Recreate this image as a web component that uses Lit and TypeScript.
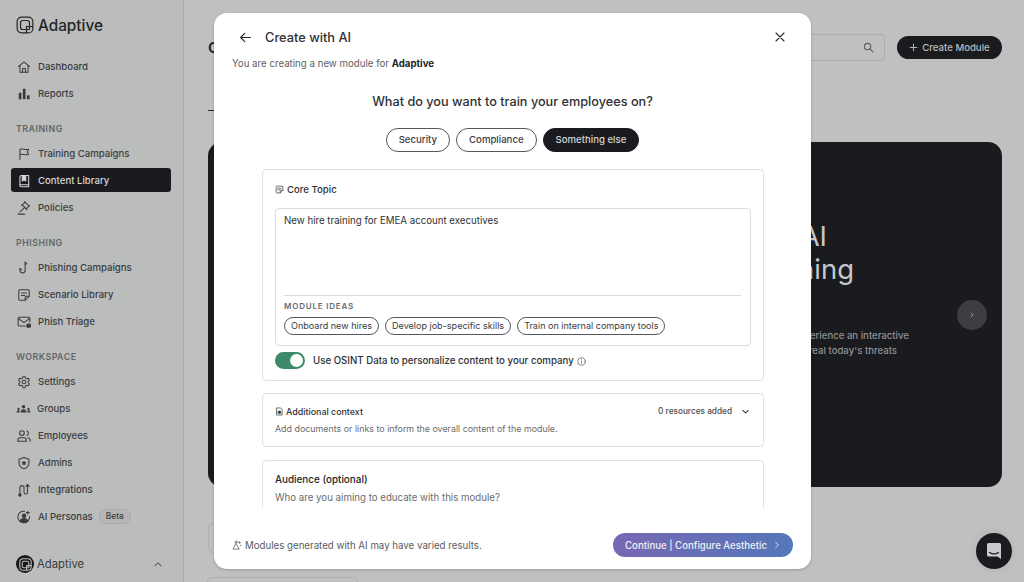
import { LitElement, html, css, svg } from "lit";
import { customElement } from "lit/decorators.js";

const icons: Record<string, any> = {
  home: svg`<path d="M2.500 11 12 3.500l9.500 7.500"/><path d="M5 9.500V21h14V9.500"/><path d="M9.500 21v-6.500h5V21"/>`,
  bars: svg`<g fill="currentColor" stroke="none"><rect x="3" y="10" width="4.600" height="11" rx="1"/><rect x="10" y="3" width="4.600" height="18" rx="1"/><rect x="17" y="14" width="4.600" height="7" rx="1"/></g>`,
  flag: svg`<path d="M5 22V4c5-1.800 9 1.800 15 0l-2.500 4.500L20 13c-6 1.800-10-1.800-15 0"/>`,
  book: svg`<path d="M5 5a2.500 2.500 0 0 1 2.500-2.500H20V22H7.500A2.500 2.500 0 0 1 5 19.500z"/><path d="M9 2.500V12l3-2 3 2V2.500" fill="currentColor"/><path d="M5 18.500h15"/>`,
  gavel: svg`<path d="m14 10.500-9 8"/><path d="m15.500 14 6-6"/><path d="m8 7.500 6-5.500"/><path d="m9 6.500 8 8.500"/><path d="m20.500 8.500-7.500-7"/><path d="M2 22.500h11"/>`,
  hook: svg`<path d="M14 6v10a4.500 4.500 0 0 1-9 0v-3.500l3 2.500"/><path d="M14 2v4"/><path d="m17 5-3-3"/>`,
  note: svg`<path d="M3 5a2 2 0 0 1 2-2h14a2 2 0 0 1 2 2v9l-7 7H5a2 2 0 0 1-2-2z"/><path d="M7.500 8.500h9M7.500 13h6"/><path d="M14 21v-5a2 2 0 0 1 2-2h5"/>`,
  mail: svg`<path d="M14 19H4a2 2 0 0 1-2-2V6a2 2 0 0 1 2-2h16a2 2 0 0 1 2 2v6"/><path d="m2.500 6 9.500 7 9.500-7"/><rect x="17" y="15.500" width="6" height="5.500" rx="1.500" fill="currentColor"/>`,
  gear: svg`<path d="M12.220 2h-.44a2 2 0 0 0-2 2v.18a2 2 0 0 1-1 1.730l-.43.25a2 2 0 0 1-2 0l-.15-.08a2 2 0 0 0-2.730.73l-.22.38a2 2 0 0 0 .73 2.730l.15.1a2 2 0 0 1 1 1.720v.51a2 2 0 0 1-1 1.740l-.15.09a2 2 0 0 0-.73 2.730l.22.38a2 2 0 0 0 2.730.73l.15-.08a2 2 0 0 1 2 0l.43.25a2 2 0 0 1 1 1.730V20a2 2 0 0 0 2 2h.44a2 2 0 0 0 2-2v-.18a2 2 0 0 1 1-1.730l.43-.25a2 2 0 0 1 2 0l.15.08a2 2 0 0 0 2.730-.73l.22-.39a2 2 0 0 0-.73-2.730l-.15-.08a2 2 0 0 1-1-1.740v-.5a2 2 0 0 1 1-1.740l.15-.09a2 2 0 0 0 .73-2.730l-.22-.38a2 2 0 0 0-2.730-.73l-.15.08a2 2 0 0 1-2 0l-.43-.25a2 2 0 0 1-1-1.730V4a2 2 0 0 0-2-2z"/><circle cx="12" cy="12" r="3"/>`,
  groups: svg`<g fill="currentColor" stroke="none"><circle cx="12" cy="8" r="3"/><path d="M7 18c0-3.500 2.200-5.500 5-5.500s5 2 5 5.500z"/><circle cx="3.500" cy="12" r="2"/><path d="M0 18c0-2.500 1.500-4 3.500-4 .8 0 1.500.3 2 .7C5 15.800 5 17 5 18z"/><circle cx="20.500" cy="12" r="2"/><path d="M24 18c0-2.500-1.500-4-3.500-4-.8 0-1.500.3-2 .7.5 1.100.5 2.300.5 3.300z"/></g>`,
  users: svg`<path d="M16 21v-2a4 4 0 0 0-4-4H5a3.500 3.500 0 0 0-3.500 3.500V21z"/><circle cx="8.500" cy="7" r="4"/><path d="M17 3.500a4 4 0 0 1 0 7.500"/><path d="M19 15c2 .5 3.500 2 3.500 4v2"/>`,
  shield: svg`<path d="M12 2.500 3.500 5.500V12c0 5 3.500 8.200 8.500 10 5-1.800 8.500-5 8.500-10V5.500z"/><path d="m12 7.500 1.400 2.900 3.100.4-2.300 2.100.6 3.100-2.800-1.500-2.800 1.500.6-3.100-2.300-2.100 3.100-.4z" fill="currentColor" stroke="none"/>`,
  integ: svg`<path d="M5 19V8a3.500 3.500 0 0 1 7 0v8a3 3 0 0 0 6 0V4"/><circle cx="5" cy="20.500" r="2" fill="currentColor"/><path d="m15 6 3-3.500L21 6" fill="currentColor"/>`,
  persona: svg`<path d="M21.500 11.500A10 10 0 1 1 13 2.100"/><circle cx="12" cy="10" r="3" fill="currentColor"/><path d="M5 18.500c1.500-3 4-4 7-4s5.500 1 7 4c-2 2.200-4.200 3.300-7 3.300s-5-1.100-7-3.300z" fill="currentColor"/><path d="M18.500 2v5M16 4.500h5"/>`,
  spark: svg`<path d="M3 21 9 8l8 13z"/><circle cx="10" cy="5" r="2.500"/><path d="M18 4v4M16 6h4M20 13h2"/>`,
  doc: svg`<path d="M5 2.500h10l4 4V21.500H5z"/><path d="M9 11h6v6H9z" fill="currentColor"/>`,
  info: svg`<circle cx="12" cy="12" r="10"/><path d="M12 11v6"/><path d="M12 7v.5"/>`,
};

function icon(name: string, cls = "i14") {
  return html`<svg class="${cls}" viewBox="0 0 24 24" fill="none" stroke="currentColor" stroke-width="1.800" stroke-linecap="round" stroke-linejoin="round">${icons[name]}</svg>`;
}

const logo = svg`<rect x="1.500" y="1.500" width="21" height="21" rx="6"/><path d="M18 18H9a3 3 0 0 1-3-3V9a3 3 0 0 1 3-3h6a3 3 0 0 1 3 3v9"/><path d="M14 22.500V14h8.500"/>`;

@customElement("app-root")
export class AppRoot extends LitElement {
  static styles = css`
    :host { display: block; position: relative; width: 1024px; height: 582px; overflow: hidden;
      font-family: Inter, "Liberation Sans", sans-serif; background: #bfc1c0; color: #2c2e31; }
    .i14 { width: 14px; height: 14px; flex: none; }
    .i9 { width: 9px; height: 9px; flex: none; }
    .layout { display: flex; height: 582px; }

    .side { width: 184px; flex: none; box-sizing: border-box; height: 582px; padding: 0 12px 0 11px;
      background: #bbbdbc; border-right: 1px solid #adafae; display: flex; flex-direction: column; }
    .brand { display: flex; align-items: center; height: 53px; padding: 0 0 3px 5px; gap: 4px; color: #232528; box-sizing: border-box; flex: none; }
    .brand svg { width: 18px; height: 18px; flex: none; }
    .brand span { font-size: 15.300px; font-weight: 500; }
    .item { display: flex; align-items: center; height: 27px; padding-left: 6px; gap: 7px; font-size: 9.600px; color: #3a3c3f; flex: none; position: relative; }
    .item span { font-weight: 450; }
    .item.wide svg { margin-left: -1px; width: 15px; }
    .item.wide { gap: 6px; }
    .item.active { color: #d5d6d7; }
    .item.active::before { content: ""; position: absolute; left: 0; right: 0; top: 1px; bottom: 2px; background: #1a1b1f; border-radius: 3px; }
    .item.active > * { position: relative; }
    .label { height: 14px; line-height: 14px; margin: 15px 0 4px 5px; font-size: 8.800px; font-weight: 600; letter-spacing: .5px; color: #636567; flex: none; }
    .beta { font-size: 8.400px; font-weight: 500; height: 15px; line-height: 13px; box-sizing: border-box; padding: 0 6px; border: 1px solid #a8aaa9; border-radius: 8px; background: #b5b7b6; margin-left: -1px; }
    .org { margin-top: auto; height: 36px; display: flex; align-items: center; padding: 0 8px 0 5px; flex: none; gap: 3px; font-size: 11.300px; color: #3a3c3f; box-sizing: border-box; }
    .orgmark { width: 18px; height: 18px; border-radius: 50%; background: #17181b; color: #bbbdbc; display: flex; align-items: center; justify-content: center; flex: none; }
    .orgmark svg { width: 13px; height: 13px; }
    .org .chev { margin-left: auto; width: 10px; height: 10px; color: #55575a; }

    .main { flex: 1; min-width: 0; box-sizing: border-box; padding: 0 22px 0 24px; display: flex; flex-direction: column; }
    .top { display: flex; align-items: center; height: 94px; flex: none; box-sizing: border-box; }
    .title { font-size: 15px; font-weight: 600; color: #202225; }
    .search { margin-left: auto; width: 300px; height: 27px; box-sizing: border-box; border: 1px solid #adafae; border-radius: 4px; display: flex; align-items: center; justify-content: flex-end; padding-right: 10px; color: #5c5e60; }
    .search svg { width: 11px; height: 11px; }
    .create { margin-left: 12px; width: 105px; height: 23px; border-radius: 12px; background: #1a1b1f; color: #bcbdbe; display: flex; align-items: center; justify-content: center; gap: 4px; font-size: 9.600px; font-weight: 450; white-space: nowrap; }
    .tabs { height: 17px; flex: none; }
    .tab { width: 60px; height: 17px; border-bottom: 1px solid #2b2d30; box-sizing: border-box; }
    .hero { margin-top: 31px; height: 345px; flex: none; box-sizing: border-box; background: #1a1b1f; border-radius: 14px; position: relative; padding-top: 78px; display: flex; flex-direction: column; align-items: flex-end; overflow: hidden; }
    .h-line { font-size: 27.500px; line-height: 33px; font-weight: 400; color: #c6c7c8; white-space: nowrap; }
    .h-a { padding-right: 175px; }
    .h-b { padding-right: 148px; }
    .b-line { font-size: 9.600px; line-height: 14.500px; color: #909192; white-space: nowrap; font-weight: 450; }
    .b-a { margin-top: 43px; padding-right: 93px; }
    .b-b { padding-right: 105px; }
    .next { position: absolute; left: 749px; top: 158px; width: 30px; height: 30px; border-radius: 50%; background: #3d3e41; color: #a9aaab; display: flex; align-items: center; justify-content: center; }
    .next svg { width: 6px; height: 6px; }
    .row2 { margin-top: 36px; width: 150px; height: 30px; flex: none; border: 1px solid #adafae; border-radius: 5px; box-sizing: border-box; }
    .row3 { margin-top: 24px; margin-left: -1px; width: 151px; height: 30px; flex: none; border: 1px solid #adafae; border-radius: 5px; box-sizing: border-box; }

    .modal { position: absolute; left: 214px; top: 13px; width: 597px; height: 556px; background: #fff; border-radius: 13px; box-shadow: 0 1px 3px rgba(0,0,0,.2); display: flex; flex-direction: column; overflow: hidden; }
    .mhead { display: flex; align-items: center; height: 48px; padding: 0 25px; flex: none; margin-bottom: -4px; box-sizing: border-box; color: #2a2c2f; }
    .mhead .back { width: 13px; height: 13px; margin-right: 13px; }
    .mhead .x { width: 12px; height: 12px; margin-left: auto; }
    .mhead h1 { margin: 0; font-size: 12.800px; font-weight: 500; color: #2f3134; }
    .sub { height: 14px; line-height: 14px; padding-left: 18px; font-size: 9.700px; color: #5f6163; flex: none; }
    .sub b { font-weight: 700; color: #232528; }
    .body { flex: 1; min-height: 0; overflow: hidden; }
    .q { margin: 22px 0 0; height: 18px; line-height: 18px; text-align: center; font-size: 12.700px; font-weight: 450; color: #2f3134; }
    .pills { display: flex; justify-content: center; gap: 6px; margin-top: 17px; }
    .pill { height: 24px; line-height: 22px; box-sizing: border-box; padding: 0 12px; border: 1px solid #55575a; border-radius: 12px; font-size: 9.600px; color: #3a3c3f; font-weight: 450; }
    .pill.on { background: #1a1b1f; color: #d3d4d5; border-color: #1a1b1f; }
    .card { margin: 0 0 0 48px; width: 502px; box-sizing: border-box; border: 1px solid #e0e1e1; border-radius: 4px; padding: 0 12px; background: #fff; }
    .core { margin-top: 17px; height: 212px; padding-top: 12px; }
    .ctitle { display: flex; align-items: center; gap: 3px; height: 14px; font-size: 9.600px; font-weight: 500; color: #2f3134; }
    .ta { margin-top: 12px; height: 138px; box-sizing: border-box; border: 1px solid #d9dadb; border-radius: 4px; padding: 6px 9px 0 8px; display: flex; flex-direction: column; }
    .ta-text { font-size: 9.700px; line-height: 12px; color: #2f3134; }
    .ideas { margin-top: auto; border-top: 1px solid #d9dadb; padding: 4px 0 10px; }
    .ideas-l { height: 12px; line-height: 12px; font-size: 8px; font-weight: 600; letter-spacing: .8px; color: #6a6c6e; }
    .chips { display: flex; gap: 6px; margin-top: 5px; }
    .chip { height: 18px; line-height: 16px; box-sizing: border-box; padding: 0 6px; border: 1px solid #55575a; border-radius: 9px; font-size: 9.050px; color: #3a3c3f; white-space: nowrap; }
    .osint { display: flex; align-items: center; margin-top: 6px; height: 17px; font-size: 9.700px; font-weight: 500; color: #2f3134; }
    .tog { width: 30px; height: 17px; border-radius: 9px; background: #3d8a6a; display: flex; align-items: center; justify-content: flex-end; padding-right: 2px; box-sizing: border-box; margin-right: 8px; flex: none; }
    .tog::after { content: ""; width: 13px; height: 13px; border-radius: 50%; background: #fff; }
    .osint svg { width: 9px; height: 9px; margin-left: 3px; margin-top: 2px; color: #4a4c4f; }
    .extra { margin-top: 12px; height: 54px; padding-top: 10px; }
    .ex-row { display: flex; align-items: center; height: 14px; gap: 2px; font-size: 8.900px; font-weight: 500; color: #2f3134; }
    .ex-n { margin-left: auto; font-size: 8.250px; color: #4a4c4f; margin-right: 7px; }
    .ex-row .chev { width: 9px; height: 9px; margin-right: 1px; }
    .desc { margin-top: 5px; height: 12px; line-height: 12px; font-size: 8.900px; color: #6a6c6e; }
    .aud { margin-top: 13px; height: 80px; padding-top: 11px; }
    .aud-t { height: 14px; line-height: 14px; font-size: 9.900px; font-weight: 500; color: #232528; }
    .aud-s { margin-top: 5px; height: 14px; line-height: 14px; font-size: 9.700px; color: #6a6c6e; }
    .foot { height: 61px; flex: none; box-sizing: border-box; display: flex; align-items: flex-end; padding: 0 18px 12px 18px; justify-content: space-between; }
    .note { display: flex; align-items: center; gap: 3px; height: 24px; font-size: 9.700px; color: #5a5c5e; }
    .note svg { width: 10px; height: 10px; }
    .go { width: 180px; height: 24px; border-radius: 12px; background: linear-gradient(90deg, #7867b4, #5478b9); color: #eef0f6; display: flex; align-items: center; justify-content: center; gap: 6px; font-size: 9.650px; font-weight: 450; white-space: nowrap; }
    .go svg { width: 8px; height: 8px; }
    .chat { position: absolute; left: 976px; top: 533px; width: 36px; height: 36px; border-radius: 50%; background: #1a1b1f; display: flex; align-items: center; justify-content: center; box-shadow: 0 0 8px rgba(0,0,0,.08); }
    .chat svg { width: 16px; height: 18px; }
  `;

  private item(ic: string, t: string, cls = "") {
    return html`<div class="item ${cls}">${icon(ic)}<span>${t}</span></div>`;
  }

  render() {
    return html`
      <div class="layout">
        <aside class="side">
          <div class="brand"><svg viewBox="0 0 24 24" fill="none" stroke="currentColor" stroke-width="1.600">${logo}</svg><span>Adaptive</span></div>
          ${this.item("home", "Dashboard")}
          ${this.item("bars", "Reports")}
          <div class="label">TRAINING</div>
          ${this.item("flag", "Training Campaigns")}
          ${this.item("book", "Content Library", "active")}
          ${this.item("gavel", "Policies")}
          <div class="label">PHISHING</div>
          ${this.item("hook", "Phishing Campaigns")}
          ${this.item("note", "Scenario Library")}
          ${this.item("mail", "Phish Triage")}
          <div class="label">WORKSPACE</div>
          ${this.item("gear", "Settings")}
          ${this.item("groups", "Groups", "wide")}
          ${this.item("users", "Employees")}
          ${this.item("shield", "Admins")}
          ${this.item("integ", "Integrations")}
          <div class="item">${icon("persona")}<span>AI Personas</span><span class="beta">Beta</span></div>
          <div class="org">
            <div class="orgmark"><svg viewBox="0 0 24 24" fill="none" stroke="currentColor" stroke-width="2">${logo}</svg></div>
            <span>Adaptive</span>
            <svg class="chev" viewBox="0 0 24 24" fill="none" stroke="currentColor" stroke-width="2.500" stroke-linecap="round" stroke-linejoin="round"><path d="m5 16 7-7 7 7"/></svg>
          </div>
        </aside>
        <main class="main">
          <div class="top">
            <div class="title">Content</div>
            <div class="search"><svg viewBox="0 0 24 24" fill="none" stroke="currentColor" stroke-width="2.500" stroke-linecap="round"><circle cx="10" cy="10" r="7"/><path d="m15.500 15.500 6 6"/></svg></div>
            <div class="create"><svg class="i9" viewBox="0 0 24 24" fill="none" stroke="currentColor" stroke-width="2.500" stroke-linecap="round"><path d="M12 3v18M3 12h18"/></svg>Create Module</div>
          </div>
          <div class="tabs"><div class="tab"></div></div>
          <section class="hero">
            <div class="h-line h-a">Adaptive AI</div>
            <div class="h-line h-b">Training</div>
            <div class="b-line b-a">Experience an interactive</div>
            <div class="b-line b-b">as real today's threats</div>
            <div class="next"><svg viewBox="0 0 24 24" fill="none" stroke="currentColor" stroke-width="3" stroke-linecap="round" stroke-linejoin="round"><path d="m8 4 8 8-8 8"/></svg></div>
          </section>
          <div class="row2"></div>
          <div class="row3"></div>
        </main>
      </div>

      <div class="modal">
        <div class="mhead">
          <svg class="back" viewBox="0 0 24 24" fill="none" stroke="currentColor" stroke-width="2.200" stroke-linecap="round" stroke-linejoin="round"><path d="M21 12H3M10.500 4.500 3 12l7.500 7.500"/></svg>
          <h1>Create with AI</h1>
          <svg class="x" viewBox="0 0 24 24" fill="none" stroke="currentColor" stroke-width="2.200" stroke-linecap="round"><path d="M4 4l16 16M20 4 4 20"/></svg>
        </div>
        <div class="sub">You are creating a new module for <b>Adaptive</b></div>
        <div class="body">
          <h2 class="q">What do you want to train your employees on?</h2>
          <div class="pills">
            <div class="pill">Security</div>
            <div class="pill">Compliance</div>
            <div class="pill on">Something else</div>
          </div>
          <div class="card core">
            <div class="ctitle">${icon("note", "i9")}<span>Core Topic</span></div>
            <div class="ta">
              <div class="ta-text">New hire training for EMEA account executives</div>
              <div class="ideas">
                <div class="ideas-l">MODULE IDEAS</div>
                <div class="chips">
                  <div class="chip">Onboard new hires</div>
                  <div class="chip">Develop job-specific skills</div>
                  <div class="chip">Train on internal company tools</div>
                </div>
              </div>
            </div>
            <div class="osint"><div class="tog"></div><span>Use OSINT Data to personalize content to your company</span>${icon("info", "i9")}</div>
          </div>
          <div class="card extra">
            <div class="ex-row">${icon("doc", "i9")}<span>Additional context</span><span class="ex-n">0 resources added</span>
              <svg class="chev" viewBox="0 0 24 24" fill="none" stroke="currentColor" stroke-width="2.800" stroke-linecap="round" stroke-linejoin="round"><path d="m5 9 7 7 7-7"/></svg>
            </div>
            <div class="desc">Add documents or links to inform the overall content of the module.</div>
          </div>
          <div class="card aud">
            <div class="aud-t">Audience (optional)</div>
            <div class="aud-s">Who are you aiming to educate with this module?</div>
          </div>
        </div>
        <div class="foot">
          <div class="note">${icon("spark")}<span>Modules generated with AI may have varied results.</span></div>
          <div class="go"><span>Continue | Configure Aesthetic</span><svg viewBox="0 0 24 24" fill="none" stroke="currentColor" stroke-width="2.500" stroke-linecap="round" stroke-linejoin="round"><path d="m8 4 8 8-8 8"/></svg></div>
        </div>
      </div>

      <div class="chat"><svg viewBox="0 0 16 18"><path d="M2.500 1h11A1.500 1.500 0 0 1 15 2.500V17l-3.500-2.500h-9A1.500 1.500 0 0 1 1 13V2.500A1.500 1.500 0 0 1 2.500 1z" fill="#c9cacb"/><path d="M3.500 10.500c2.800 1.800 6.200 1.800 9 0" fill="none" stroke="#1a1b1f" stroke-width="1.200" stroke-linecap="round"/></svg></div>
    `;
  }
}
